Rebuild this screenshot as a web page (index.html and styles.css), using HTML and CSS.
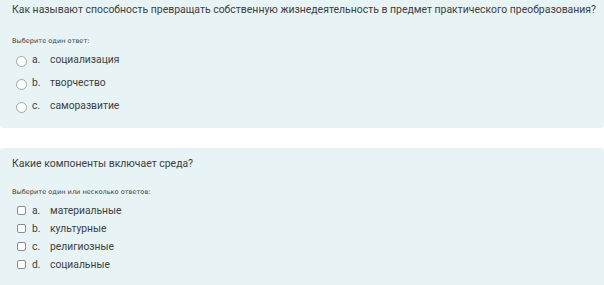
FILE: index.html
```html
<!DOCTYPE html>
<html lang="ru">
<head>
<meta charset="utf-8">
<link rel="stylesheet" href="styles.css">
</head>
<body>
<div class="que que-first">
  <div class="qtext">Как называют способность превращать собственную жизнедеятельность в предмет практического преобразования?</div>
  <div class="prompt">Выберите один ответ:</div>
  <div class="answers radio">
    <div class="opt"><span class="radio-box"></span><span class="num">a.</span><span class="lbl">социализация</span></div>
    <div class="opt"><span class="radio-box"></span><span class="num">b.</span><span class="lbl">творчество</span></div>
    <div class="opt"><span class="radio-box"></span><span class="num">c.</span><span class="lbl">саморазвитие</span></div>
  </div>
</div>
<div class="que que-second">
  <div class="qtext">Какие компоненты включает среда?</div>
  <div class="prompt">Выберите один или несколько ответов:</div>
  <div class="answers check">
    <div class="opt"><span class="check-box"></span><span class="num">a.</span><span class="lbl">материальные</span></div>
    <div class="opt"><span class="check-box"></span><span class="num">b.</span><span class="lbl">культурные</span></div>
    <div class="opt"><span class="check-box"></span><span class="num">c.</span><span class="lbl">религиозные</span></div>
    <div class="opt"><span class="check-box"></span><span class="num">d.</span><span class="lbl">социальные</span></div>
  </div>
</div>
</body>
</html>
```
FILE: styles.css
```css
html, body {
  margin: 0;
  padding: 0;
  background: #ffffff;
}
body {
  font-family: Roboto, "Noto Sans", sans-serif;
  color: #404040;
  font-size: 10.3px;
  overflow: hidden;
  height: 285px;
}
.que {
  background: #e7f3f5;
  border-radius: 3px;
  padding: 0 12px;
  box-sizing: border-box;
}
.que-first {
  height: 128px;
  padding-top: 3px;
  margin-bottom: 20px;
  border-top-left-radius: 0;
  border-top-right-radius: 0;
}
.que-second {
  height: 137px;
  padding-top: 9px;
  border-bottom-left-radius: 0;
  border-bottom-right-radius: 0;
}
.qtext {
  font-size: 10.45px;
  line-height: 13px;
  white-space: nowrap;
}
.prompt {
  font-family: "DejaVu Sans", Verdana, sans-serif;
  font-size: 6.6px;
  line-height: 9px;
  margin-top: 21px;
}
.que-second .prompt {
  margin-top: 18px;
}
.answers {
  display: flex;
  flex-direction: column;
  margin-top: 7px;
}
.answers.radio {
  gap: 10px;
}
.answers.check {
  gap: 5px;
}
.opt {
  display: flex;
  align-items: center;
  height: 13px;
  line-height: 13px;
  font-size: 10.3px;
}
.radio-box {
  width: 11px;
  height: 11px;
  border: 1px solid #a6a6a6;
  border-radius: 50%;
  background: #fff;
  box-sizing: border-box;
  margin-left: 4px;
  margin-top: 4px;
  flex: none;
}
.check-box {
  width: 9px;
  height: 9px;
  border: 1px solid #8a8a8a;
  border-radius: 2px;
  background: #fff;
  box-sizing: border-box;
  margin-left: 5px;
  flex: none;
}
.num {
  margin-left: 5px;
  width: 18px;
  flex: none;
}
.check .num {
  margin-left: 6px;
}
.lbl {
  white-space: nowrap;
}
```
